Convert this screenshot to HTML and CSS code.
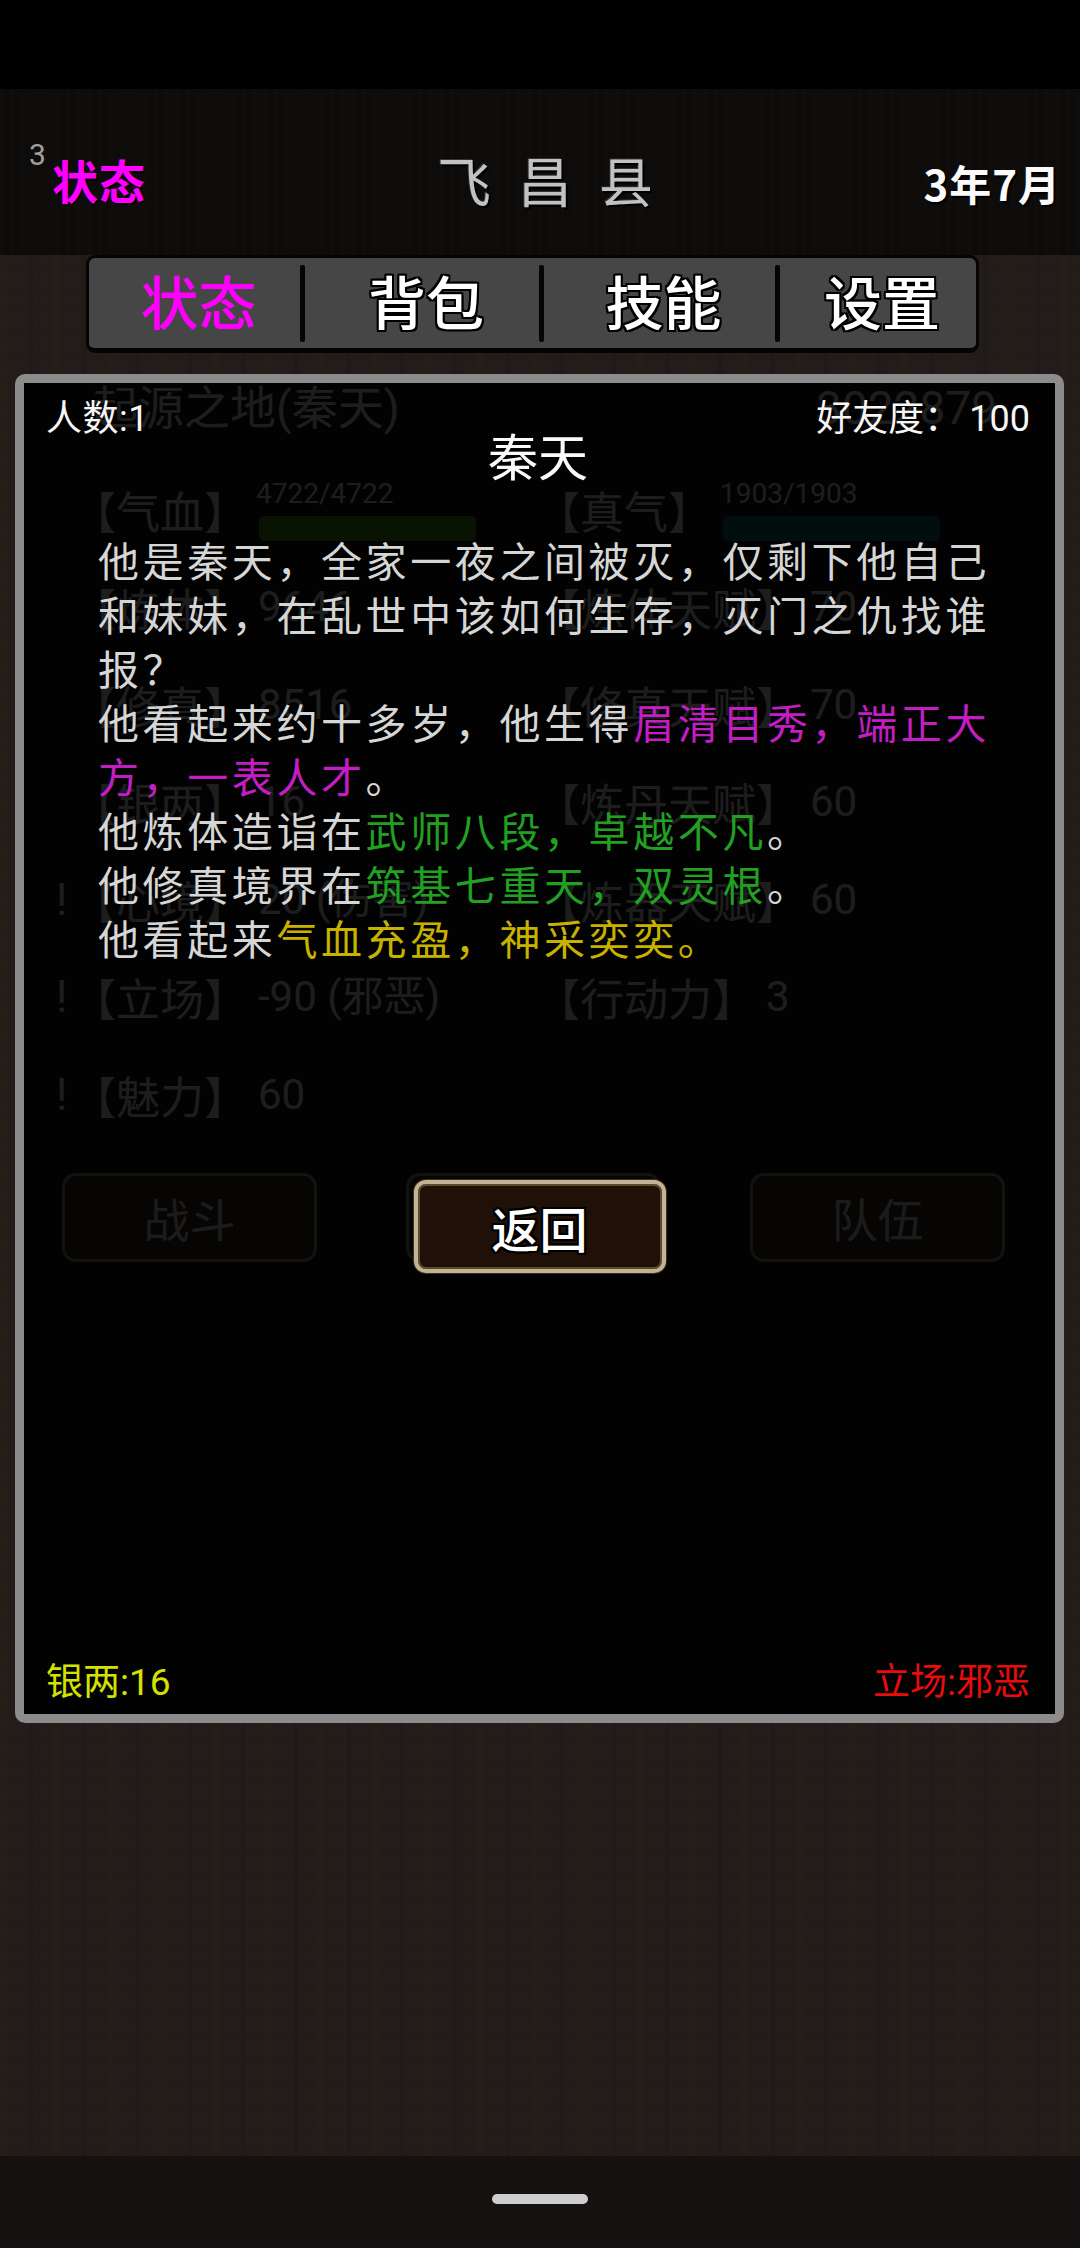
FILE: index.html
```html
<!DOCTYPE html>
<html lang="zh-CN">
<head>
<meta charset="utf-8">
<title>状态</title>
<link rel="stylesheet" href="styles.css">
</head>
<body>
<div class="phone">
  <div class="statusbar"></div>
  <header class="hdr">
    <div class="hdr-left"><span class="hdr-num">3</span><span class="hdr-tab">状态</span></div>
    <div class="hdr-title">飞昌县</div>
    <div class="hdr-date">3年7月</div>
  </header>
  <main class="stage">
    <nav class="tabs">
      <div class="tab tab-1 active">状态</div><i class="sep"></i>
      <div class="tab tab-2">背包</div><i class="sep"></i>
      <div class="tab tab-3">技能</div><i class="sep"></i>
      <div class="tab tab-4">设置</div>
    </nav>
    <section class="panel">
      <div class="status">
        <div class="st-head"><span>起源之地(秦天)</span><span>3022879</span></div>
        <div class="st-row">
          <div class="cell"><span class="bang"></span><span class="lbl">【气血】</span>
            <div class="gauge"><span class="gv">4722/4722</span><span class="bar hp"></span></div></div>
          <div class="cell"><span class="lbl">【真气】</span>
            <div class="gauge"><span class="gv">1903/1903</span><span class="bar mp"></span></div></div>
        </div>
        <div class="st-row">
          <div class="cell"><span class="bang"></span><span class="lbl">【炼体】</span><span class="val">9646</span></div>
          <div class="cell"><span class="lbl">【炼体天赋】</span><span class="val">70</span></div>
        </div>
        <div class="st-row">
          <div class="cell"><span class="bang"></span><span class="lbl">【修真】</span><span class="val">8516</span></div>
          <div class="cell"><span class="lbl">【修真天赋】</span><span class="val">70</span></div>
        </div>
        <div class="st-row">
          <div class="cell"><span class="bang"></span><span class="lbl">【银两】</span><span class="val">16</span></div>
          <div class="cell"><span class="lbl">【炼丹天赋】</span><span class="val">60</span></div>
        </div>
        <div class="st-row">
          <div class="cell"><span class="bang">!</span><span class="lbl">【心境】</span><span class="val">20 (伤害)</span></div>
          <div class="cell"><span class="lbl">【炼器天赋】</span><span class="val">60</span></div>
        </div>
        <div class="st-row">
          <div class="cell"><span class="bang">!</span><span class="lbl">【立场】</span><span class="val">-90 (邪恶)</span></div>
          <div class="cell"><span class="lbl">【行动力】</span><span class="val">3</span></div>
        </div>
        <div class="st-row">
          <div class="cell"><span class="bang">!</span><span class="lbl">【魅力】</span><span class="val">60</span></div>
          <div class="cell"></div>
        </div>
        <div class="st-btns">
          <div class="sbtn">战斗</div>
          <div class="sbtn">交谈</div>
          <div class="sbtn">队伍</div>
        </div>
      </div>

      <div class="dlg">
        <div class="dlg-top">
          <span class="dlg-count">人数:1</span>
          <h1 class="dlg-name">秦天</h1>
          <span class="dlg-fav">好友度： 100</span>
        </div>
        <div class="desc">
          <p>他是秦天，全家一夜之间被灭，仅剩下他自己和妹妹，在乱世中该如何生存，灭门之仇找谁报？</p>
          <p>他看起来约十多岁，他生得<span class="c-mag">眉清目秀，端正大方，一表人才</span>。</p>
          <p>他炼体造诣在<span class="c-grn">武师八段，卓越不凡</span>。</p>
          <p>他修真境界在<span class="c-grn">筑基七重天，双灵根</span>。</p>
          <p>他看起来<span class="c-yel">气血充盈，神采奕奕。</span></p>
        </div>
        <div class="back">返回</div>
        <div class="dlg-foot">
          <span class="silver">银两:16</span>
          <span class="stance">立场:邪恶</span>
        </div>
      </div>
    </section>
  </main>
  <footer class="navbar"><span class="pill"></span></footer>
</div>
</body>
</html>
```

FILE: styles.css
```css
* { box-sizing: border-box; margin: 0; padding: 0; }

html, body {
  width: 1080px;
  height: 2248px;
  overflow: hidden;
  background: #000;
}

body {
  font-family: Roboto, "Noto Sans CJK SC", sans-serif;
  color: #fff;
}

.phone {
  width: 1080px;
  height: 2248px;
  display: flex;
  flex-direction: column;
}

.statusbar {
  height: 89px;
  background: #000;
  flex: none;
}

/* ---------- header ---------- */
.hdr {
  height: 166px;
  flex: none;
  background-color: #0e0c0b;
  background-image: repeating-linear-gradient(90deg, rgba(255,255,255,0.008) 0 3px, transparent 3px 11px);
  display: grid;
  grid-template-columns: 1fr auto 1fr;
  align-items: start;
  padding: 51px 19px 0 29px;
}

.hdr-left {
  display: flex;
  align-items: flex-start;
  font-family: "Noto Sans CJK SC", sans-serif;
}

.hdr-num {
  font-family: Roboto, sans-serif;
  font-size: 30px;
  line-height: 30px;
  color: #a0a0a0;
  width: 23px;
}

.hdr-tab {
  font-size: 46px;
  line-height: 46px;
  font-weight: 700;
  color: #ff00ff;
  margin-top: 16px;
  letter-spacing: 1px;
  text-shadow: 1px 2px 0 #000;
}

.hdr-title {
  font-family: "Noto Sans CJK SC", sans-serif;
  font-size: 54px;
  line-height: 60px;
  margin-top: 10px;
  letter-spacing: 27px;
  margin-right: -27px;
  color: #c2c2c2;
  text-shadow: 2px 2px 1px #000, -1px -1px 0 #333;
}

.hdr-date {
  justify-self: end;
  font-family: "Noto Sans CJK SC", sans-serif;
  font-size: 42px;
  line-height: 50px;
  margin-top: 18px;
  font-weight: 700;
  color: #fafafa;
  letter-spacing: 1px;
  text-shadow: 2px 2px 1px #000;
}

/* ---------- stage ---------- */
.stage {
  flex: 1;
  background-color: #221c1a;
  background-image:
    repeating-linear-gradient(90deg, rgba(60,44,14,0.10) 0 7px, transparent 7px 29px, rgba(0,0,0,0.08) 29px 33px, transparent 33px 53px),
    repeating-linear-gradient(0deg, rgba(40,30,10,0.08) 0 9px, transparent 9px 23px);
  display: flex;
  flex-direction: column;
}

.tabs {
  margin-left: 86px;
  width: 893px;
  height: 98px;
  background: #464646;
  border: 3px solid #050505;
  border-bottom-width: 5px;
  border-radius: 9px;
  display: flex;
  align-items: center;
  font-family: "Noto Sans CJK SC", sans-serif;
}

.tab {
  height: 100%;
  display: flex;
  align-items: center;
  justify-content: center;
  padding-left: 8px;
  padding-bottom: 6px;
  font-size: 58px;
  font-weight: 500;
  color: #fff;
  text-shadow: -2px 0 #000, 2px 0 #000, 0 -2px #000, 0 2px #000,
               -2px -2px #000, 2px 2px #000, -2px 2px #000, 2px -2px #000;
}
.tab-1 { width: 211px; }
.tab-2 { width: 234px; }
.tab-3 { width: 231px; }
.tab-4 { width: 196px; }
.tab.active { color: #ff00ff; text-shadow: none; }

.sep {
  width: 5px;
  height: 77px;
  background: #050505;
  border-radius: 2px;
  flex: none;
}

/* ---------- panel ---------- */
.panel {
  position: relative;
  margin: 21px 16px 0 15px;
  height: 1349px;
  border: 9px solid #8c8c8c;
  border-radius: 10px;
  background: #101010;
  overflow: hidden;
}

/* underlying status page (dimmed by dialog overlay) */
.status {
  font-family: Roboto, "Noto Sans CJK SC", sans-serif;
  color: #e6e6e6;
}

.st-head {
  height: 78px;
  display: flex;
  justify-content: space-between;
  align-items: flex-start;
  padding: 0 58px 0 68px;
  font-size: 46px;
  line-height: 50px;
}

.st-row {
  height: 97.5px;
  display: grid;
  grid-template-columns: 484px 1fr;
  padding-left: 28px;
}

.cell {
  display: flex;
  align-items: center;
}

.bang {
  width: 20px;
  font-size: 44px;
  line-height: 1;
  padding-left: 4px;
}

.lbl {
  font-family: "Noto Sans CJK SC", sans-serif;
  font-size: 44px;
  line-height: 1;
}

.val {
  font-size: 42px;
  margin-left: 10px;
  line-height: 1;
}

.gauge {
  display: flex;
  flex-direction: column;
  margin-left: 8px;
}

.gv {
  font-size: 28px;
  line-height: 30px;
}

.bar {
  display: block;
  width: 217px;
  height: 25px;
  margin: 7px 0 0 3px;
  border-radius: 5px;
}
.bar.hp { background: #4a9a0c; }
.bar.mp { background: #0e7070; }

.st-btns {
  margin-top: 29px;
  display: flex;
  gap: 89px;
  padding-left: 38px;
}

.sbtn {
  width: 255px;
  height: 89px;
  border: 3px solid #a09070;
  border-radius: 14px;
  background: #3a2c1e;
  display: flex;
  align-items: center;
  justify-content: center;
  font-family: "Noto Sans CJK SC", sans-serif;
  font-size: 46px;
  color: #d8d8d8;
}

/* ---------- dialog overlay ---------- */
.dlg {
  position: absolute;
  inset: 0;
  background: rgba(0, 0, 0, 0.875);
  display: flex;
  flex-direction: column;
  font-family: Roboto, "Noto Sans CJK SC", sans-serif;
}

.dlg-top {
  display: grid;
  grid-template-columns: 1fr auto 1fr;
  align-items: start;
  padding: 15px 25px 0 22px;
  font-size: 36px;
  line-height: 43px;
  color: #f6f6f6;
}

.dlg-count { letter-spacing: 0.5px; }

.dlg-name {
  font-family: "Noto Sans CJK SC", sans-serif;
  font-weight: 400;
  font-size: 50px;
  line-height: 60px;
  margin-top: 26px;
  color: #fafafa;
}

.dlg-fav { justify-self: end; }

.desc {
  margin: 48px 0 0 74px;
  width: 900px;
  font-family: "Noto Sans CJK SC", sans-serif;
  font-size: 41px;
  line-height: 54px;
  letter-spacing: 3.6px;
  color: #d6d6d6;
}

.c-mag { color: #c21ec4; }
.c-grn { color: #22a022; }
.c-yel { color: #c8b200; }

.back {
  align-self: center;
  margin-top: 216px;
  width: 252px;
  height: 93px;
  border: 4px solid #c4b393;
  border-radius: 12px;
  background: #1f1108;
  box-shadow: inset 0 0 0 2px #5a4a32, 0 0 0 1px #3a3024;
  display: flex;
  align-items: center;
  justify-content: center;
  font-family: "Noto Sans CJK SC", sans-serif;
  font-size: 48px;
  font-weight: 500;
  color: #fff;
  text-shadow: -2px 0 #000, 2px 0 #000, 0 -2px #000, 0 2px #000,
               -2px -2px #000, 2px 2px #000, -2px 2px #000, 2px -2px #000;
}

.dlg-foot {
  margin-top: auto;
  display: flex;
  justify-content: space-between;
  padding: 0 25px 10px 22px;
  font-size: 37px;
  line-height: 43px;
}

.silver { color: #d4e200; }
.stance { color: #e80c0c; }

/* ---------- nav bar ---------- */
.navbar {
  height: 92px;
  flex: none;
  background: #151110;
  display: flex;
  justify-content: center;
  padding-top: 38px;
}

.pill {
  width: 96px;
  height: 10px;
  border-radius: 5px;
  background: #cdcdcd;
}
```
